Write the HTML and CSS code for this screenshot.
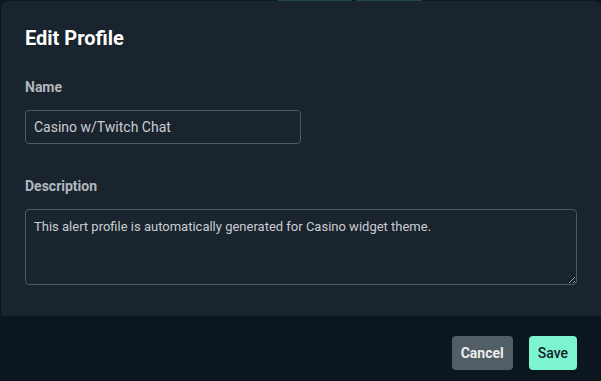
FILE: index.html
```html
<!doctype html>
<html>
<head>
    <meta charset="utf-8">
    <title>Edit Profile</title>
    <link rel="stylesheet" href="styles.css">
</head>
<body>
    <div class="backdrop-tabs">
        <span class="tab"></span>
        <span class="tab tab-second"></span>
    </div>
    <div class="modal">
        <div class="modal-body">
            <h2 class="modal-title">Edit Profile</h2>

            <label class="field-label" for="profile-name">Name</label>
            <input id="profile-name" class="field-input" type="text" value="Casino w/Twitch Chat">

            <label class="field-label field-label-desc" for="profile-desc">Description</label>
            <textarea id="profile-desc" class="field-textarea">This alert profile is automatically generated for Casino widget theme.</textarea>
        </div>

        <div class="modal-footer">
            <button class="btn btn-cancel">Cancel</button>
            <button class="btn btn-save">Save</button>
        </div>
    </div>
</body>
</html>
```

FILE: styles.css
```css
html, body {
    margin: 0;
    height: 100%;
}

body {
    background: #0b161e;
    font-family: Roboto, "Liberation Sans", sans-serif;
    overflow: hidden;
    position: relative;
}

.backdrop-tabs {
    position: absolute;
    top: 0;
    left: 278px;
    display: flex;
    gap: 4px;
    z-index: 0;
}

.tab {
    display: block;
    width: 74px;
    height: 2px;
    background: #1f4a44;
}

.tab-second {
    width: 66px;
}

.modal {
    position: relative;
    z-index: 1;
    padding-top: 1px;
}

.modal-body {
    margin-left: 1px;
    background: #1a242e;
    border-radius: 6px 6px 0 0;
    padding: 25px 24px 31px;
}

.modal-title {
    margin: 0 0 29px;
    color: #ffffff;
    font-size: 20px;
    font-weight: 700;
    line-height: 24px;
}

.field-label {
    display: block;
    color: #b1b8be;
    font-size: 14px;
    font-weight: 700;
    line-height: 16px;
    margin-bottom: 15px;
}

.field-label-desc {
    margin-top: 34px;
}

.field-input,
.field-textarea {
    display: block;
    box-sizing: border-box;
    background: #1a242e;
    border: 1px solid #4d5963;
    border-radius: 4px;
    color: #c9cdd1;
    font-family: Roboto, "Liberation Sans", sans-serif;
    outline: 0;
}

.field-input {
    width: 276px;
    height: 34px;
    padding: 0 8px;
    font-size: 14px;
}

.field-textarea {
    width: 552px;
    height: 76px;
    padding: 9px 8px;
    font-size: 13px;
    line-height: 16px;
    resize: vertical;
}

.modal-footer {
    display: flex;
    justify-content: flex-end;
    gap: 16px;
    padding: 20px 24px;
    background: #0b161e;
}

.btn {
    height: 34px;
    border: 0;
    border-radius: 4px;
    padding: 0 9px;
    font-family: Roboto, "Liberation Sans", sans-serif;
    font-size: 14px;
    cursor: pointer;
}

.btn-cancel {
    background: #525e66;
    color: #ececec;
    font-weight: 700;
}

.btn-save {
    background: #7cf4d0;
    color: #13212a;
    font-weight: 500;
}
```
